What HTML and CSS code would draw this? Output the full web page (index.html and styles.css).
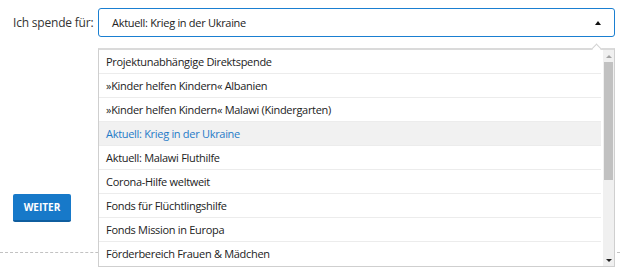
FILE: index.html
```html
<!DOCTYPE html>
<html lang="de">
<head>
    <meta charset="UTF-8">
    <meta name="viewport" content="width=device-width, initial-scale=1.0">
    <title>Spenden</title>
    <link rel="stylesheet" href="styles.css">
</head>
<body>
    <div class="donation">
        <div class="field-row">
            <label class="field-label">Ich spende für:</label>
            <div class="select-wrap">
                <div class="select-box open">
                    <span class="select-value">Aktuell: Krieg in der Ukraine</span>
                    <span class="select-arrow"></span>
                </div>
                <div class="select-dropdown">
                    <ul class="select-options">
                        <li>Projektunabhängige Direktspende</li>
                        <li>»Kinder helfen Kindern« Albanien</li>
                        <li>»Kinder helfen Kindern« Malawi (Kindergarten)</li>
                        <li class="selected">Aktuell: Krieg in der Ukraine</li>
                        <li>Aktuell: Malawi Fluthilfe</li>
                        <li>Corona-Hilfe weltweit</li>
                        <li>Fonds für Flüchtlingshilfe</li>
                        <li>Fonds Mission in Europa</li>
                        <li>Förderbereich Frauen &amp; Mädchen</li>
                    </ul>
                    <div class="scrollbar">
                        <div class="scroll-btn up"></div>
                        <div class="scroll-track">
                            <div class="scroll-thumb"></div>
                        </div>
                        <div class="scroll-btn down"></div>
                    </div>
                </div>
            </div>
        </div>

        <div class="actions">
            <button class="btn-next">Weiter</button>
        </div>
    </div>

    <hr class="divider">
</body>
</html>
```

FILE: styles.css
```css
html, body {
    min-height: 100vh;
}

body {
    margin: 0;
    padding: 0;
    font-family: "Open Sans", Arial, sans-serif;
    background-color: #fff;
    color: #2b2b2b;
}

.donation {
    padding: 8px 5px 0 13px;
}

.field-row {
    display: flex;
    align-items: center;
}

.field-label {
    width: 85px;
    flex-shrink: 0;
    font-size: 12px;
    letter-spacing: -0.2px;
    color: #333;
}

.select-wrap {
    flex-grow: 1;
    position: relative;
}

.select-box {
    display: flex;
    justify-content: space-between;
    align-items: center;
    height: 29px;
    box-sizing: border-box;
    padding: 0 13px;
    border: 1px solid #1a7fd1;
    border-radius: 3px;
    font-size: 11px;
    letter-spacing: -0.3px;
    color: #222;
}

.select-arrow {
    width: 0;
    height: 0;
    border-left: 3px solid transparent;
    border-right: 3px solid transparent;
    border-bottom: 4px solid #111;
}

.select-dropdown {
    position: absolute;
    top: 40px;
    left: 0;
    right: 0;
    z-index: 10;
    display: flex;
    background-color: #fff;
    border: 1px solid #cfcfcf;
    border-top: 2px solid #dadada;
}

.select-dropdown::before {
    content: "";
    position: absolute;
    top: -5px;
    right: 14px;
    width: 6px;
    height: 6px;
    background-color: #fff;
    border-top: 1px solid #d3d3d3;
    border-left: 1px solid #d3d3d3;
    transform: rotate(45deg);
}

.select-options {
    flex-grow: 1;
    list-style-type: none;
    margin: 0;
    padding: 0 2px 0 0;
    height: 216px;
    overflow: hidden;
}

.select-options li {
    height: 24px;
    box-sizing: border-box;
    line-height: 23px;
    padding: 0 7px;
    border-bottom: 1px solid #ececec;
    font-size: 11px;
    letter-spacing: -0.3px;
    color: #222;
    white-space: nowrap;
}

.select-options li:last-child {
    border-bottom: none;
}

.select-options li.selected {
    background-color: #f1f1f1;
    color: #1f7bc8;
}

.scrollbar {
    width: 11px;
    display: flex;
    flex-direction: column;
    background-color: #f0f0f0;
}

.scroll-btn {
    height: 12px;
    display: flex;
    justify-content: center;
    align-items: center;
}

.scroll-btn.up::after {
    content: "";
    border-left: 3px solid transparent;
    border-right: 3px solid transparent;
    border-bottom: 3px solid #a3a3a3;
}

.scroll-btn.down::after {
    content: "";
    border-left: 3px solid transparent;
    border-right: 3px solid transparent;
    border-top: 3px solid #222;
}

.scroll-track {
    flex-grow: 1;
    padding: 0 1px;
}

.scroll-thumb {
    height: 118px;
    background-color: #c1c1c1;
}

.actions {
    margin-top: 157px;
}

.btn-next {
    width: 58px;
    height: 28px;
    padding: 0;
    border: none;
    border-bottom: 2px solid #0f5e9f;
    border-radius: 2px;
    background-color: #1779c9;
    color: #fff;
    font-family: "Open Sans", Arial, sans-serif;
    font-size: 10px;
    font-weight: bold;
    text-transform: uppercase;
    cursor: pointer;
}

.divider {
    margin: 30px 0 0;
    border: none;
    border-top: 1px dashed #c2c2c2;
}
```
